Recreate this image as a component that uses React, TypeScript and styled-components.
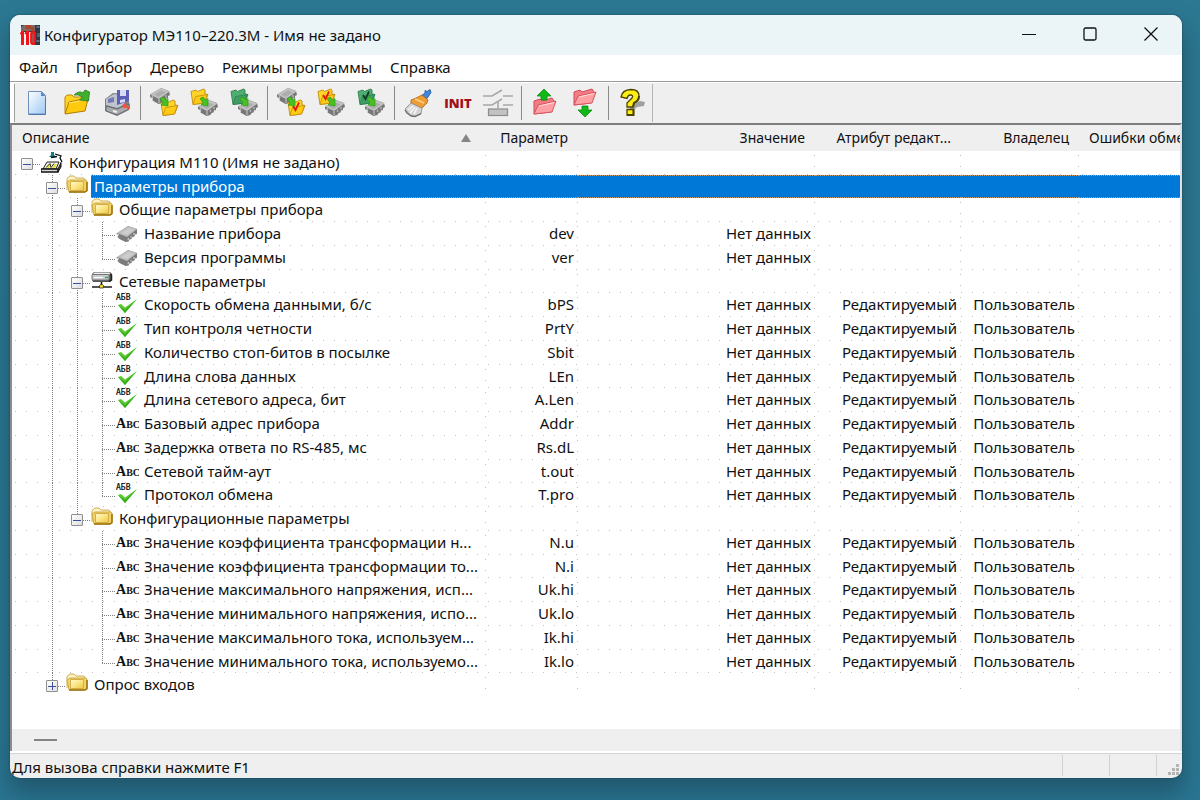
import React from 'react';
import styled, { createGlobalStyle, css } from 'styled-components';

const Global = createGlobalStyle`
  *, *::before, *::after { box-sizing: border-box; }
  body { margin: 0; background: #2c7892; font-family: "Noto Sans", "Open Sans", sans-serif; font-size: 15px; color: #111; }
  button { font: inherit; color: inherit; border: 0; padding: 0; background: none; }
`;

/* ---------- window frame ---------- */

const Desktop = styled.div`
  min-height: 100vh;
  display: flex;
  padding: 15px 18px 22px 10px;
  overflow: hidden;
  background: linear-gradient(#2c7892, #2a7693);
`;

const Window = styled.main`
  flex: 1;
  min-width: 0;
  display: flex;
  flex-direction: column;
  overflow: hidden;
  background: #efefef;
  border-radius: 10px;
  box-shadow: 0 0 1px 1px rgba(30, 70, 90, 0.35), 0 14px 24px 2px rgba(18, 42, 52, 0.4);
`;

const TitleBar = styled.header`
  display: flex;
  align-items: center;
  height: 40px;
  padding: 0 1px 0 10px;
  background: #ebf5f8;
`;

const Title = styled.h1`
  flex: 1;
  margin: 0;
  padding-left: 2px;
  font-size: 15px;
  font-weight: 400;
  line-height: 20px;
  white-space: nowrap;
`;

const WindowButton = styled.button`
  display: grid;
  place-items: center;
  width: 61px;
  height: 38px;
  align-self: flex-start;
`;

const MenuBar = styled.nav`
  display: flex;
  gap: 18px;
  height: 26px;
  padding: 2px 9px 4px;
  line-height: 20px;
  background: #fff;
`;

const MenuItem = styled.button`
  white-space: nowrap;
`;

/* ---------- toolbar ---------- */

const ToolbarRow = styled.div`
  display: flex;
  height: 42px;
  padding: 0 0 0 4px;
  border-top: 1px solid #9a9a9a;
  background: #efefef;
  box-shadow: inset 4px 0 #fff, inset 0 1px #fff;
`;

const Toolbar = styled.div`
  display: flex;
  align-items: center;
  margin: 2px 0 1px;
  padding-left: 2px;
  border-left: 1px solid #a0a0a0;
  border-right: 1px solid #b4b4b4;
`;

const ToolButton = styled.button`
  display: grid;
  place-items: center;
  width: 40px;
  height: 36px;
`;

const ToolSeparator = styled.span`
  width: 1px;
  height: 34px;
  margin: 0 3px;
  background: #8a8a8a;
`;

const InitLabel = styled.span`
  font: 800 13px/16px "Open Sans", sans-serif;
  color: #a01218;
`;

/* ---------- tree table ---------- */

const Panel = styled.section`
  flex: 1;
  display: flex;
  flex-direction: column;
  overflow: hidden;
  border-top: 2px solid #7d7d7d;
  border-left: 2px solid #8c8c8c;
  border-right: 2px solid #e2e2e2;
  background: #fff;
`;

const Table = styled.table`
  width: 100%;
  table-layout: fixed;
  border-collapse: separate;
  border-spacing: 0;
`;

const Column = styled.col<{ $width?: number }>`
  width: ${(p) => (p.$width ? `${p.$width}px` : 'auto')};
`;

const HeadRow = styled.tr`
  height: 26px;
  background: #efefef;
`;

const HeadCell = styled.th<{ $align?: 'left' | 'right' }>`
  padding: 0 10px;
  font-size: 14px;
  font-weight: 400;
  line-height: 20px;
  text-align: ${(p) => p.$align ?? 'right'};
  white-space: nowrap;
  overflow: hidden;
`;

const SortLine = styled.div`
  display: flex;
  align-items: center;
  justify-content: space-between;
  padding-right: 5px;
`;

const SortMark = styled.span`
  border: 5px solid transparent;
  border-top: 0;
  border-bottom: 8px solid #868686;
`;

const Row = styled.tr<{ $selected?: boolean }>`
  height: 24px;
  line-height: 20px;
  background: linear-gradient(90deg, #c2c2c2 1px, transparent 1px) 3px 100% / 11px 1px repeat-x;
  &:nth-child(4n + 2) { height: 23px; }
  &:last-child { background: none; }
  ${(p) => p.$selected && css`color: #fff;`}
`;

const selectedFill = css`
  border: 0 dotted #c79a6c;
  border-width: 1px 0;
  padding-top: 0;
  padding-bottom: 0;
  background: #0078d7;
`;

const Cell = styled.td<{ $selected?: boolean; $last?: boolean }>`
  padding: 0 4px 2px 0;
  text-align: right;
  white-space: nowrap;
  overflow: hidden;
  ${(p) => !p.$last && css`background: linear-gradient(#bdbdbd 1px, transparent 1px) 100% 4px / 1px 11px repeat-y;`}
  ${(p) => p.$selected && selectedFill}
`;

const TreeCell = styled(Cell)`
  height: inherit;
  padding: 0;
  text-align: left;
  ${(p) => p.$selected && css`background: none; border: 0;`}
`;

const TreeLine = styled.div`
  display: flex;
  height: 100%;
  padding-left: 3px;
`;

type Guide = 'none' | 'full' | 'half';

const Branch = styled.span<{ $guide: Guide; $dash?: boolean }>`
  flex: none;
  display: flex;
  align-items: center;
  justify-content: center;
  width: 25px;
  padding-top: 2px;
  background:
    repeating-linear-gradient(#808080 0 1px, transparent 1px 2px) 12px 0 / 1px
      ${(p) => ({ none: '0', half: '14px', full: '100%' })[p.$guide]} no-repeat,
    repeating-linear-gradient(90deg, #808080 0 1px, transparent 1px 2px) 12px 13px /
      ${(p) => (p.$dash ? '13px' : '0')} 1px no-repeat;
`;

const Expander = styled.button`
  display: grid;
  place-items: center;
  width: 12px;
  height: 12px;
  margin-right: 1px;
  border: 1px solid #8f8f8f;
  border-radius: 1px;
  background: linear-gradient(135deg, #fff, #dedede);
`;

const IconSlot = styled.span`
  flex: none;
  display: flex;
  width: 26px;
  padding-left: 1px;
`;

const Label = styled.span<{ $selected?: boolean }>`
  flex: 1;
  min-width: 0;
  padding: 1px 5px 0 3px;
  overflow: hidden;
  text-overflow: ellipsis;
  white-space: nowrap;
  ${(p) => p.$selected && selectedFill}
`;

const ScrollTrack = styled.div`
  display: flex;
  align-items: center;
  height: 22px;
  margin-top: auto;
  padding-left: 22px;
  background: #efefef;
`;

const ScrollThumb = styled.div`
  width: 23px;
  height: 2px;
  background: #858585;
`;

/* ---------- status bar ---------- */

const StatusBar = styled.footer`
  display: flex;
  height: 27px;
  padding: 1px 0 2px;
  border-top: 2px solid #fff;
  box-shadow: inset 0 1px #d4d4d4;
  line-height: 20px;
`;

const StatusText = styled.span`
  flex: 1;
  padding: 3px 2px 0;
`;

const StatusPane = styled.span<{ $width: number }>`
  display: flex;
  align-items: flex-end;
  justify-content: flex-end;
  width: ${(p) => p.$width}px;
  margin-top: 1px;
  padding-right: 2px;
  border-left: 1px solid #d2d2d2;
`;

/* ---------- tree icons ---------- */

const FolderIcon = () => (
  <svg width="22" height="22" viewBox="0 0 22 22">
    <defs>
      <linearGradient id="fold" x1="0" y1="0" x2="1" y2="1">
        <stop offset="0" stopColor="#fffbd0" /><stop offset=".5" stopColor="#fbe684" /><stop offset="1" stopColor="#ecc548" />
      </linearGradient>
    </defs>
    <path d="M1 15V4l1.500-2L4 1h4l2 2h7l2 1v3" fill="#fdf3c0" stroke="#c9a648" strokeWidth=".9" />
    <path d="M1 7l2 10h15.500l2.500-1.500V6l-1.500-1H4z" fill="#f3d466" stroke="#c29c38" strokeWidth=".8" />
    <path d="M4.500 6.500h13v9h-13z" fill="url(#fold)" stroke="#d4ae4a" />
    <path d="M3 17h16l2-1.500V7" fill="none" stroke="#9a7208" strokeWidth="1.500" />
  </svg>
);

const ChipIcon = () => (
  <svg width="22" height="22" viewBox="0 0 22 22">
    <path d="M0 12l3-2 9-6 9 3v5l-2 .5-.5 2-2 .5-1 2-2 .5-1 2-3 .5-6-3-2-2 1-2z" fill="#7c7c7c" />
    <path d="M1 11l11-7 9 3-10 8z" fill="#bdbdbd" />
    <path d="M5 11l8-5 5 2-7 5z" fill="#cdcdcd" />
    <path d="M1 13l2-.5M12 18l.5-2M15 15.500V14M18 13v-2" stroke="#dcdcdc" />
  </svg>
);

const ConfigIcon = () => (
  <svg width="22" height="22" viewBox="0 0 22 22">
    <path d="M8 6l2-2V1h3v3l3 2-3 .5z" fill="#12807e" />
    <path d="M14 3l6 2-1 2 2 4M10 6.500l6-1" fill="none" stroke="#111" strokeWidth="1.300" />
    <path d="M6 11h12l-3 7H2z" fill="#f6f6f6" stroke="#222" />
    <path d="M7 13h3l-2 4H5zM13 13h3l-2 4h-3z" fill="#e8e23c" />
    <path d="M5 16.500l4-4 1 4 3-4" fill="none" stroke="#333" />
    <path d="M0 18h17v3H0z" fill="#d8d8d8" stroke="#111" strokeWidth="1.300" />
    <path d="M17 18l3-6.500V16l-3 5z" fill="#555" stroke="#111" />
  </svg>
);

const NetworkIcon = () => (
  <svg width="22" height="22" viewBox="0 0 22 22">
    <path d="M3 2h16l2 2v6l-2 2H2l-1-2V4z" fill="#555" />
    <path d="M3.500 2.500h15l1.500 2H1.500z" fill="#ededed" />
    <rect x="1" y="4.500" width="17" height="5.500" rx="1" fill="#c9cccc" stroke="#777" />
    <path d="M3 7.500h9" stroke="#fff" />
    <path d="M14 7.500h3" stroke="#22b14c" strokeWidth="1.500" />
    <path d="M19 4l1.500 1v5L18 11.500" fill="none" stroke="#222" strokeWidth="1.500" />
    <path d="M10.500 12v5M1 17h20" stroke="#1c1c1c" strokeWidth="1.600" />
    <path d="M8.500 15.500l1-1h2l1 1v2.500h-4z" fill="#e8cf2c" stroke="#333" strokeWidth=".8" />
  </svg>
);

const CheckIcon = () => (
  <svg width="22" height="22" viewBox="0 0 22 22">
    <text x="0" y="7" fontFamily="DejaVu Sans Mono, monospace" fontSize="8" fill="#000" stroke="#000" strokeWidth=".2">АБВ</text>
    <path d="M2 12l3-1 4 3.500L21 6 9 20z" fill="#57cc2f" />
    <path d="M2 12l7 5L21 6 9 20z" fill="#37ad1e" />
  </svg>
);

const AbcIcon = () => (
  <svg width="23" height="22" viewBox="0 0 23 22">
    <text x="0" y="16" fontFamily="Liberation Serif, serif" fontWeight="700" fill="#111">
      <tspan fontSize="14">A</tspan><tspan fontSize="10">BC</tspan>
    </text>
  </svg>
);

/* ---------- toolbar drawings ---------- */

const Tool = ({ children }: { children: React.ReactNode }) => (
  <svg width="30" height="30" viewBox="0 0 30 30">{children}</svg>
);

const Chip = ({ x, y }: { x: number; y: number }) => (
  <g transform={`translate(${x} ${y})`}>
    <path d="M0 6.500L11 0l8 3 1 4-2 1 0 2-2 .5-.5 2-2 .5-1 2-4 1-6-3.500.5-2L0 9z" fill="#777" />
    <path d="M0 6.500L11 0l8.500 3.500L9 11z" fill="#c2c2c2" />
    <path d="M4 6.500L11 2.500l4.500 2L8.500 9z" fill="#adadad" />
    <path d="M9 11v4M12.500 9.500V12M16 7v2.500M2 8l1 2" stroke="#b4b4b4" strokeWidth="1.400" />
  </g>
);

const Bin = ({ x, y, green, check }: { x: number; y: number; green?: boolean; check?: boolean }) => (
  <g transform={`translate(${x} ${y})`}>
    <path d="M1 2.500L6 1l1.500 1.500L13.500 0l1.500 1v4l3 .5L14.500 14 3 15.500z" fill={green ? '#4fae72' : '#ffd628'} stroke={green ? '#2c7f4c' : '#c08a10'} strokeWidth=".9" />
    <path d="M3 15.500L5.500 7.500l12-2-3 8.500z" fill={green ? '#3f9c62' : '#ffca14'} stroke={green ? '#2c7f4c' : '#c08a10'} strokeWidth=".8" />
    {check && <path d="M6 6l2.500 4L12 2.500" fill="none" stroke={green ? '#123f24' : '#e01c10'} strokeWidth="1.800" />}
  </g>
);

const Arrow = ({ x, y }: { x: number; y: number }) => (
  <path transform={`translate(${x} ${y})`} d="M0 1.500L3 0l3 3 2-1.500V9L1 8l2-2z" fill="#48c022" stroke="#319c18" strokeWidth=".7" />
);

const Transfer = ({ kind, check }: { kind: 'read' | 'write' | 'export'; check?: boolean }) => (
  <Tool>
    {kind === 'read' ? (
      <><Chip x={1} y={0} /><Bin x={11} y={12} check={check} /></>
    ) : (
      <><Bin x={1} y={1} green={kind === 'export'} check={check} /><Chip x={9} y={12} /></>
    )}
    <Arrow x={11} y={9} />
  </Tool>
);

const PinkFolder = ({ up }: { up?: boolean }) => (
  <Tool>
    <g transform={up ? 'translate(0 8)' : 'translate(0 -1)'}>
      <path d="M4 18V5l6-2 2 2 10-3 2 3-3 11z" fill="#f47c84" stroke="#d04a56" />
      <path d="M4 18l4-9 18-4-4 11z" fill="#ffa0a4" stroke="#d65560" />
      <path d="M9 10l15-3.500" stroke="#ffdcdc" />
    </g>
    <path d={up ? 'M14 1l7 7h-4v4h-6V8H7z' : 'M12 18h6v4h4l-7 7-7-7h4z'} fill="#10b818" stroke="#0a8f10" strokeWidth=".8" />
  </Tool>
);

const NewIcon = () => (
  <Tool>
    <defs>
      <linearGradient id="page" x1="0" y1="0" x2="1" y2="1">
        <stop offset="0" stopColor="#fff" /><stop offset="1" stopColor="#9cc8f4" />
      </linearGradient>
    </defs>
    <path d="M6.500 3.500h13l4 4v18.500h-17z" fill="url(#page)" stroke="#6d8fbe" />
    <path d="M19 3.500v4.500h4.500z" fill="#5b87c4" />
    <path d="M6.500 26.500h17V10" fill="none" stroke="#4f77ad" />
  </Tool>
);

const OpenIcon = () => (
  <Tool>
    <path d="M3 25V9l2-2h5l2 2h10l2 4" fill="#ffd320" stroke="#b88608" />
    <path d="M3 26l4-12 9-2 10-1-3 12z" fill="#ffc90e" stroke="#b07c05" />
    <path d="M7 15l16-3" stroke="#ffe97a" />
    <path d="M12 7q5-5 9-2l2-3 4.500 2-1 9-9-1 3-3q-4-3-8-2z" fill="#3fb02a" stroke="#23791a" strokeWidth=".8" />
  </Tool>
);

const SaveIcon = () => (
  <Tool>
    <path d="M3 11l8-6 14 1 3 12-1 4-12 6-12-5z" fill="#7d8088" />
    <path d="M4 11l8-5 11 2-1 9-7 3-11-3z" fill="#c0c3cc" />
    <path d="M4 18l11 3 12-5v5l-12 6-11-4z" fill="#a8aaae" stroke="#66686e" />
    <path d="M6 11l6-2v5l-6 1z" fill="#7479b8" />
    <path d="M15 2h12v11l-12 4z" fill="#5a60b4" />
    <path d="M18 2h6v6h-6zM18 12l5-1v3l-5 1z" fill="#d6daf4" />
    <path d="M20 17l5-2-1 2q4 1 3 5-2-3-4-2.500l-.5 1.500z" fill="#f0503c" />
    <path d="M11 23l4 1" stroke="#eee" strokeWidth="2" />
  </Tool>
);

const BrushIcon = () => (
  <Tool>
    <path d="M18 8l4-3V2.500l2 1 3-2 1 3-4 6z" fill="#3f86dc" stroke="#1c559e" strokeWidth=".8" />
    <path d="M8 12l5-2 6-3 6 5-1 3-5 5-11-4z" fill="#f09c34" stroke="#a5641a" strokeWidth=".8" />
    <path d="M12 11l9 4" stroke="#ffd08a" strokeWidth="1.500" />
    <path d="M2 21l6-6 11 5-1 6-6 2.500L8 28z" fill="#d4d4d4" stroke="#8a8a8a" strokeWidth=".8" />
    <path d="M5 22l5-4M7 25l5-6M11 26l3-6" stroke="#f7f7f7" strokeWidth="1.500" />
    <path d="M2 22l2 3 4 3 4 .5 6-3" fill="none" stroke="#6a6a6a" strokeWidth="1.300" />
  </Tool>
);

const SchemeIcon = () => (
  <Tool>
    <g fill="none" stroke="#a8a8a8" strokeWidth="1.600">
      <path d="M0 8h9l10-6M20 8h10M0 17h9l10-6M20 17h10M15 14v6" />
      <rect x="5.500" y="21" width="19" height="6.500" fill="#c2c2c2" stroke="#8c8c8c" strokeWidth="1.200" />
    </g>
  </Tool>
);

const HelpIcon = () => (
  <Tool>
    <path d="M15 17l8-4 5 1-1 4-7 1-4 4h-5z" fill="#a0a0a0" />
    <path d="M4 9q1-7 10-7.500 8 0 8 6.500 0 4-5 7l-1 4h-6v-4l5-5q2-3-2-3-2 0-3 3.500z" fill="#ffee14" stroke="#4b4300" strokeWidth="1.300" />
    <path d="M10 21.500h6.500v5.500H10z" fill="#ffee14" stroke="#4b4300" strokeWidth="1.300" />
    <path d="M22 8q0 5-5 7l-1 4M16.500 21.500V27H10" fill="none" stroke="#4b4300" strokeWidth="2" />
  </Tool>
);

const AppIcon = () => (
  <svg width="22" height="22" viewBox="0 0 22 22">
    <path d="M1 1h19v20h-6V8H1z" fill="#33373e" />
    <path d="M1 3l3-2h11v6H1z" fill="#7a6a68" />
    <path d="M6 1h5v4H6zM11 3h3v4h-3z" fill="#a8452c" />
    <path d="M16.500 3h3M16.500 17h3" stroke="#6f87a8" strokeWidth="1.500" />
    <path d="M17 9h3v4h-3z" fill="#54606e" />
    <path d="M2.500 7v14M7.500 7v14" stroke="#f3141a" strokeWidth="3" />
    <path d="M0 10l3-3M5 10l2-3" stroke="#f3141a" strokeWidth="1.500" />
    <rect x="11.200" y="8.200" width="3.600" height="11.600" rx="1.800" fill="#7a6a68" stroke="#f3141a" strokeWidth="2.200" />
  </svg>
);

/* ---------- data ---------- */

type IconName = 'config' | 'folder' | 'chip' | 'net' | 'check' | 'abc';

interface Item {
  label: string;
  level: number;
  icon: IconName;
  open?: boolean;
  selected?: boolean;
  last?: boolean;
  param?: string;
  editable?: boolean;
}

const branch = (label: string, level: number, icon: IconName, extra: Partial<Item> = {}): Item =>
  ({ label, level, icon, open: true, ...extra });
const leaf = (label: string, param: string, icon: IconName, extra: Partial<Item> = {}): Item =>
  ({ label, level: 3, icon, param, editable: icon !== 'chip', ...extra });

const items: Item[] = [
  branch('Конфигурация М110 (Имя не задано)', 0, 'config'),
  branch('Параметры прибора', 1, 'folder', { selected: true }),
  branch('Общие параметры прибора', 2, 'folder'),
  leaf('Название прибора', 'dev', 'chip'),
  leaf('Версия программы', 'ver', 'chip', { last: true }),
  branch('Сетевые параметры', 2, 'net'),
  leaf('Скорость обмена данными, б/с', 'bPS', 'check'),
  leaf('Тип контроля четности', 'PrtY', 'check'),
  leaf('Количество стоп-битов в посылке', 'Sbit', 'check'),
  leaf('Длина слова данных', 'LEn', 'check'),
  leaf('Длина сетевого адреса, бит', 'A.Len', 'check'),
  leaf('Базовый адрес прибора', 'Addr', 'abc'),
  leaf('Задержка ответа по RS-485, мс', 'Rs.dL', 'abc'),
  leaf('Сетевой тайм-аут', 't.out', 'abc'),
  leaf('Протокол обмена', 'T.pro', 'check', { last: true }),
  branch('Конфигурационные параметры', 2, 'folder', { last: true }),
  leaf('Значение коэффициента трансформации н...', 'N.u', 'abc'),
  leaf('Значение коэффициента трансформации то...', 'N.i', 'abc'),
  leaf('Значение максимального напряжения, исп...', 'Uk.hi', 'abc'),
  leaf('Значение минимального напряжения, испо...', 'Uk.lo', 'abc'),
  leaf('Значение максимального тока, используем...', 'Ik.hi', 'abc'),
  leaf('Значение минимального тока, используемо...', 'Ik.lo', 'abc', { last: true }),
  branch('Опрос входов', 1, 'folder', { open: false, last: true }),
];

const icons: Record<IconName, React.FC> = {
  config: ConfigIcon, folder: FolderIcon, chip: ChipIcon, net: NetworkIcon, check: CheckIcon, abc: AbcIcon,
};

/* An ancestor's guide runs past a row while that ancestor still has siblings below it. */
const guideAt = (index: number, depth: number): Guide => {
  if (depth === 0) return 'none';
  const item = items[index];
  if (depth === item.level) return item.last ? 'half' : 'full';
  const next = items.slice(index + 1).find((i) => i.level <= depth);
  return next && next.level === depth ? 'full' : 'none';
};

const TreeRow = ({ item, index }: { item: Item; index: number }) => {
  const Icon = icons[item.icon];
  const depths = Array.from({ length: item.level + 1 }, (_, d) => d);
  return (
    <Row $selected={item.selected}>
      <TreeCell $selected={item.selected}>
        <TreeLine>
          {depths.map((d) => (
            <Branch key={d} $guide={guideAt(index, d)} $dash={d === item.level}>
              {d === item.level && item.open !== undefined && (
                <Expander aria-label={item.open ? 'Свернуть' : 'Развернуть'}>
                  <svg width="8" height="8" viewBox="0 0 8 8" stroke="#3a4f9c">
                    <path d={item.open ? 'M0 4.500h8' : 'M0 4.500h8M4.500 0v8'} />
                  </svg>
                </Expander>
              )}
            </Branch>
          ))}
          <IconSlot><Icon /></IconSlot>
          <Label $selected={item.selected}>{item.label}</Label>
        </TreeLine>
      </TreeCell>
      <Cell $selected={item.selected}>{item.param}</Cell>
      <Cell $selected={item.selected}>{item.param && 'Нет данных'}</Cell>
      <Cell $selected={item.selected}>{item.editable && 'Редактируемый'}</Cell>
      <Cell $selected={item.selected}>{item.editable && 'Пользователь'}</Cell>
      <Cell $selected={item.selected} $last />
    </Row>
  );
};

const tools: ([string, React.ReactNode] | null)[] = [
  ['Новый', <NewIcon />],
  ['Открыть', <OpenIcon />],
  ['Сохранить', <SaveIcon />],
  null,
  ['Считать параметры', <Transfer kind="read" />],
  ['Записать параметры', <Transfer kind="write" />],
  ['Записать все', <Transfer kind="export" />],
  null,
  ['Считать выбранные', <Transfer kind="read" check />],
  ['Записать выбранные', <Transfer kind="write" check />],
  ['Записать измененные', <Transfer kind="export" check />],
  null,
  ['Очистить', <BrushIcon />],
  ['Инициализация', <InitLabel>INIT</InitLabel>],
  ['Схема', <SchemeIcon />],
  null,
  ['Загрузить', <PinkFolder up />],
  ['Выгрузить', <PinkFolder />],
  null,
  ['Справка', <HelpIcon />],
];

export default function App() {
  return (
    <Desktop>
      <Global />
      <Window>
        <TitleBar>
          <AppIcon />
          <Title>Конфигуратор МЭ110–220.3М - Имя не задано</Title>
          <WindowButton aria-label="Свернуть окно">
            <svg width="14" height="14" viewBox="0 0 14 14" stroke="#111"><path d="M0 7.500h14" /></svg>
          </WindowButton>
          <WindowButton aria-label="Развернуть окно">
            <svg width="14" height="14" viewBox="0 0 14 14" fill="none" stroke="#111" strokeWidth="1.300">
              <rect x="1" y="1" width="12" height="12" rx="1.500" />
            </svg>
          </WindowButton>
          <WindowButton aria-label="Закрыть">
            <svg width="14" height="14" viewBox="0 0 14 14" stroke="#111" strokeWidth="1.300"><path d="M.5.5l13 13M13.500.5L.5 13.500" /></svg>
          </WindowButton>
        </TitleBar>
        <MenuBar>
          {['Файл', 'Прибор', 'Дерево', 'Режимы программы', 'Справка'].map((m) => <MenuItem key={m}>{m}</MenuItem>)}
        </MenuBar>
        <ToolbarRow>
          <Toolbar>
            {tools.map((t, i) => t
              ? <ToolButton key={i} aria-label={t[0]}>{t[1]}</ToolButton>
              : <ToolSeparator key={i} />)}
          </Toolbar>
        </ToolbarRow>
        <Panel>
          <Table>
            <colgroup>
              <Column $width={474} />
              <Column $width={92} />
              <Column $width={237} />
              <Column $width={146} />
              <Column $width={118} />
              <Column />
            </colgroup>
            <thead>
              <HeadRow>
                <HeadCell $align="left"><SortLine>Описание<SortMark /></SortLine></HeadCell>
                <HeadCell>Параметр</HeadCell>
                <HeadCell>Значение</HeadCell>
                <HeadCell>Атрибут редакт...</HeadCell>
                <HeadCell>Владелец</HeadCell>
                <HeadCell $align="left">Ошибки обме</HeadCell>
              </HeadRow>
            </thead>
            <tbody>
              {items.map((item, i) => <TreeRow key={i} item={item} index={i} />)}
            </tbody>
          </Table>
          <ScrollTrack><ScrollThumb /></ScrollTrack>
        </Panel>
        <StatusBar>
          <StatusText>Для вызова справки нажмите F1</StatusText>
          <StatusPane $width={47} />
          <StatusPane $width={47} />
          <StatusPane $width={26}>
            <svg width="12" height="12" viewBox="0 0 12 12" fill="#b4b4b4">
              <path d="M8 0h3v3H8zM4 4h3v3H4zM8 4h3v3H8zM0 8h3v3H0zM4 8h3v3H4zM8 8h3v3H8z" />
            </svg>
          </StatusPane>
        </StatusBar>
      </Window>
    </Desktop>
  );
}
